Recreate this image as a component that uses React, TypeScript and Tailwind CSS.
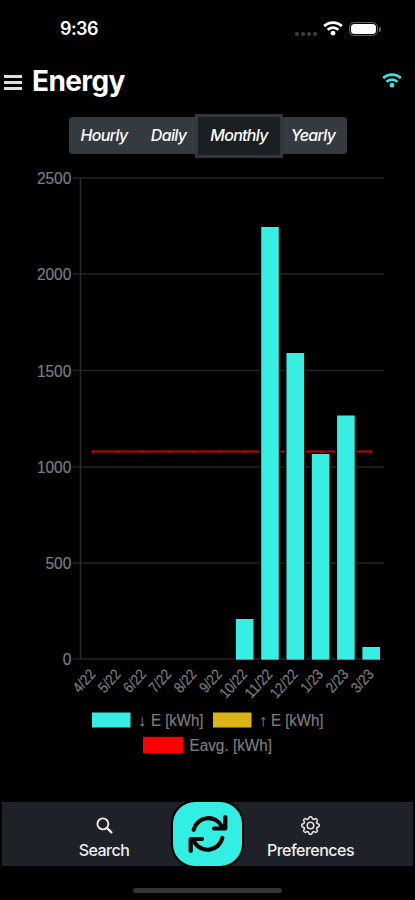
import React from 'react';
import { BsGear } from 'react-icons/bs';

const TICKS = [
  { label: '2500', y: 20 },
  { label: '2000', y: 116 },
  { label: '1500', y: 212.5 },
  { label: '1000', y: 309 },
  { label: '500', y: 405 },
  { label: '0', y: 501 },
];

const MONTHS = [
  { label: '4/22', top: 0 },
  { label: '5/22', top: 0 },
  { label: '6/22', top: 0 },
  { label: '7/22', top: 0 },
  { label: '8/22', top: 0 },
  { label: '9/22', top: 0 },
  { label: '10/22', top: 461 },
  { label: '11/22', top: 69 },
  { label: '12/22', top: 195 },
  { label: '1/23', top: 296 },
  { label: '2/23', top: 257.5 },
  { label: '3/23', top: 489 },
];

function Wifi({ className }: { className: string }) {
  return (
    <svg viewBox="0 0 20 15" className={className} fill="none" stroke="currentColor">
      <path d="M1.2 5.1C6 .4 14 .4 18.8 5.1" strokeWidth="2.9" />
      <path d="M4.6 8.8C7.7 5.9 12.3 5.9 15.4 8.8" strokeWidth="2.7" />
      <circle cx="10" cy="12.2" r="2.4" fill="currentColor" stroke="none" />
    </svg>
  );
}

function Label({ x, y, w, children, size = 16 }: { x: number; y: number; w: number; children: string; size?: number }) {
  return (
    <text x={x} y={y} textLength={w} lengthAdjust="spacingAndGlyphs" fontSize={size} fill="#7c7c7f" stroke="#7c7c7f" strokeWidth="0.2">
      {children}
    </text>
  );
}

function Chart() {
  return (
    <svg viewBox="0 0 415 610" className="block h-[610px] w-[415px] font-['Liberation_Sans',Arial,sans-serif]">
      {TICKS.map((t) => {
        const w = t.label.length * 8.6;
        return (
          <g key={t.label}>
            <path d={`M73 ${t.y}H384`} stroke="#242426" strokeWidth="1.7" />
            <Label x={71.3 - w} y={t.y + 6.2} w={w}>{t.label}</Label>
          </g>
        );
      })}
      <path d="M80.5 20V501" stroke="#2a2a2c" strokeWidth="1.5" />
      <path d="M92 293.5H372" stroke="#c40000" strokeWidth="1.8" />
      {MONTHS.map((m, i) => (
        <circle key={m.label} cx={92.8 + i * 25.3} cy="293.8" r="1.4" fill="#c40000" />
      ))}
      {MONTHS.map((m, i) => {
        const c = 92.9 + i * 25.3;
        const w = m.label.length > 4 ? 33 : 25.5;
        return (
          <g key={m.label}>
            {m.top > 0 && (
              <>
                <rect x={c - 10.2} y={m.top} width="20.4" height={501.7 - m.top} fill="#000" />
                <rect x={c - 8.8} y={m.top} width="17.6" height={501.7 - m.top} fill="#36eee2" />
              </>
            )}
            <g transform={`translate(${c + 3.4} 516.8) rotate(-48)`}>
              <Label x={-w} y={0} w={w} size={15}>{m.label}</Label>
            </g>
          </g>
        );
      })}
      <rect x="92" y="554.5" width="38.5" height="15" fill="#36eee2" />
      <Label x={138} y={568.3} w={8}>↓</Label>
      <Label x={151} y={568.3} w={52.5}>E [kWh]</Label>
      <rect x="213" y="554.5" width="38.5" height="15" fill="#d9b414" />
      <Label x={259} y={568.3} w={8}>↑</Label>
      <Label x={271} y={568.3} w={52.5}>E [kWh]</Label>
      <rect x="143" y="578.8" width="40.3" height="16.5" fill="#ff0000" />
      <Label x={189.5} y={592.8} w={82.5}>Eavg. [kWh]</Label>
    </svg>
  );
}

export default function App() {
  return (
    <div className="flex h-[900px] w-[415px] flex-col overflow-hidden bg-black font-[Inter,sans-serif] text-white">
      <div className="flex h-[58px] shrink-0 items-center pl-[60px] pr-[34px]">
        <span className="text-[18px] font-semibold leading-none tracking-[-0.6px]">9:36</span>
        <div className="ml-auto flex items-center">
          <div className="mr-[6px] mt-[9px] flex gap-[2px]">
            <i className="size-1 rounded-full bg-[#404040]" />
            <i className="size-1 rounded-full bg-[#404040]" />
            <i className="size-1 rounded-full bg-[#404040]" />
            <i className="size-1 rounded-full bg-[#404040]" />
          </div>
          <Wifi className="mb-[2px] mr-[6px] h-[15px] w-[20px]" />
          <div className="mb-px h-[14px] w-[29px] rounded-[5px] border border-[#606060] p-px">
            <div className="h-full rounded-[3.5px] bg-white" />
          </div>
          <div className="ml-px h-[5px] w-[2px] rounded-r bg-[#666]" />
        </div>
      </div>

      <header className="flex h-[46px] shrink-0 items-center pl-1 pr-[13px]">
        <div className="mt-[3px] flex w-[18px] flex-col gap-[3px]">
          <div className="h-[3px] bg-[#ddd]" />
          <div className="h-[3px] bg-[#ddd]" />
          <div className="h-[3px] bg-[#ddd]" />
        </div>
        <h1 className="-mt-px ml-[10px] text-[28px] font-bold leading-none tracking-[-0.6px]">Energy</h1>
        <Wifi className="-mt-[2px] ml-auto h-[15px] w-[20px] text-[#3be0dc]" />
      </header>

      <div className="flex h-[54px] shrink-0 items-end pl-[69px]">
        <div className="flex h-[45px] items-center text-[16px] font-medium italic tracking-[-0.7px]">
          <button className="h-[37px] w-[70px] rounded-l-[4px] bg-[#343a3f] pb-px">Hourly</button>
          <button className="h-[37px] w-[56px] bg-[#343a3f] pb-px pl-[3px]">Daily</button>
          <button className="h-[44px] w-[88px] border-[3px] border-[#32373c] bg-[#1b1f23] pb-px">Monthly</button>
          <button className="h-[37px] w-[64px] rounded-r-[4px] bg-[#343a3f] pb-px pr-[4px]">Yearly</button>
        </div>
      </div>

      <main className="h-[644px] shrink-0">
        <Chart />
      </main>

      <nav className="mx-[2px] flex h-[64px] shrink-0 bg-[#1e2127] text-[16px] font-medium tracking-[-0.5px] text-[#eee]">
        <div className="flex w-[171px] flex-col items-center pl-[33px] pt-[15px]">
          <svg viewBox="0 0 18 18" className="size-[17px]" fill="none" stroke="currentColor">
            <circle cx="7.3" cy="7.3" r="5.8" strokeWidth="2" />
            <path d="M11.5 11.5L17 17" strokeWidth="2.4" />
          </svg>
          <span className="mt-[5px] leading-[22px]">Search</span>
        </div>
        <button className="flex w-[69px] items-center justify-center rounded-[22px] bg-[#33eee2] shadow-[0_0_0_2px_#000]">
          <svg viewBox="0 0 40 40" className="size-[40px]" fill="none" stroke="#000" strokeWidth="4.2" strokeLinecap="round" strokeLinejoin="round">
            <path d="M5.7 15.7A15.2 15.2 0 0 1 34 12.5" />
            <path d="M37.3 3V14.5H26" />
            <path d="M34.3 24A15.2 15.2 0 0 1 6 27.5" />
            <path d="M2.7 37V25H14" />
          </svg>
        </button>
        <div className="flex flex-1 flex-col items-center pr-[34px] pt-[14px]">
          <BsGear className="size-[19px]" strokeWidth="0.3" />
          <span className="mt-[4px] leading-[22px]">Preferences</span>
        </div>
      </nav>
      <div className="ml-[133px] mt-[22px] h-[5px] w-[149px] rounded-full bg-[#343434]" />
    </div>
  );
}
